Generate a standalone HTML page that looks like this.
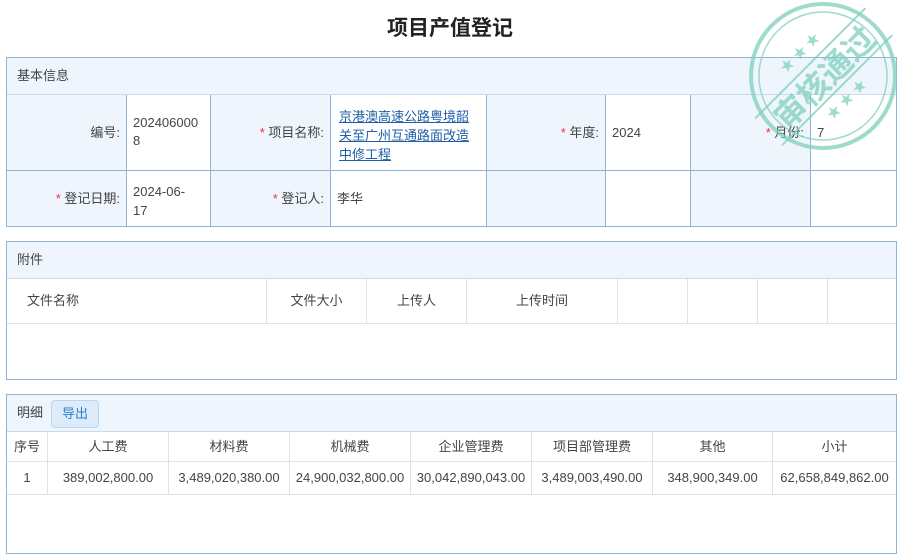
<!DOCTYPE html>
<html><head><meta charset="utf-8"><style>
*{margin:0;padding:0;box-sizing:border-box}
body{width:900px;height:547px;overflow:hidden;background:#fff;font-family:"Liberation Sans","Noto Sans CJK SC",sans-serif;font-size:13px;color:#444;position:relative}
.a{position:absolute}
.title{left:0;width:900px;top:12px;text-align:center;font-size:21px;font-weight:bold;color:#222}
.panel{position:absolute;left:6px;width:891px;border:1px solid #8fb4d4}
.ph{height:37px;background:#eef5fd;border-bottom:1px solid #c9dbea;padding-left:10px;line-height:36px}
.c{position:absolute;border-right:1px solid #8fb4d4;border-bottom:1px solid #8fb4d4}
.lb{background:#eef5fd;text-align:right;padding-right:6px}
.r{color:#e33}
.g{position:absolute;border-right:1px solid #e2e2e2;border-bottom:1px solid #e2e2e2;text-align:center}
</style></head><body>
<div class="a title">项目产值登记</div>

<div class="panel" style="top:57px;height:170px;">
<div class="ph">基本信息</div>
<div class="c lb" style="left:0;top:37px;width:120px;height:76px;line-height:76px">编号:</div>
<div class="c" style="left:120px;top:37px;width:84px;height:76px;padding:19px 6px 0;line-height:18px;word-break:break-all">2024060008</div>
<div class="c lb" style="left:204px;top:37px;width:120px;height:76px;line-height:76px"><span class="r">* </span>项目名称:</div>
<div class="c" style="left:324px;top:37px;width:156px;height:76px;padding:12px 8px 0;line-height:19px;color:#1f5fa8;text-decoration:underline">京港澳高速公路粤境韶关至广州互通路面改造中修工程</div>
<div class="c lb" style="left:480px;top:37px;width:119px;height:76px;line-height:76px"><span class="r">* </span>年度:</div>
<div class="c" style="left:599px;top:37px;width:85px;height:76px;line-height:76px;padding-left:6px">2024</div>
<div class="c lb" style="left:684px;top:37px;width:120px;height:76px;line-height:76px"><span class="r">* </span>月份:</div>
<div class="c" style="left:804px;top:37px;width:85px;height:76px;line-height:76px;padding-left:6px;border-right:none">7</div>
<div class="c lb" style="left:0;top:113px;width:120px;height:55px;line-height:55px;border-bottom:none"><span class="r">* </span>登记日期:</div>
<div class="c" style="left:120px;top:113px;width:84px;height:55px;padding:11px 6px 0;line-height:19px;border-bottom:none">2024-06-<br>17</div>
<div class="c lb" style="left:204px;top:113px;width:120px;height:55px;line-height:55px;border-bottom:none"><span class="r">* </span>登记人:</div>
<div class="c" style="left:324px;top:113px;width:156px;height:55px;line-height:55px;padding-left:6px;border-bottom:none">李华</div>
<div class="c lb" style="left:480px;top:113px;width:119px;height:55px;border-bottom:none"></div>
<div class="c" style="left:599px;top:113px;width:85px;height:55px;border-bottom:none"></div>
<div class="c lb" style="left:684px;top:113px;width:120px;height:55px;border-bottom:none"></div>
</div>
<div class="a" style="left:6px;top:57px;width:1px;height:170px;background:#8fb4d4"></div>

<div class="panel" style="top:241px;height:139px;">
<div class="ph">附件</div>
<div class="g" style="left:0;top:37px;width:260px;height:45px;line-height:44px;text-align:left;padding-left:20px">文件名称</div>
<div class="g" style="left:260px;top:37px;width:100px;height:45px;line-height:44px">文件大小</div>
<div class="g" style="left:360px;top:37px;width:100px;height:45px;line-height:44px">上传人</div>
<div class="g" style="left:460px;top:37px;width:151px;height:45px;line-height:44px">上传时间</div>
<div class="g" style="left:611px;top:37px;width:70px;height:45px"></div>
<div class="g" style="left:681px;top:37px;width:70px;height:45px"></div>
<div class="g" style="left:751px;top:37px;width:70px;height:45px"></div>
<div class="g" style="left:821px;top:37px;width:68px;height:45px;border-right:none"></div>
</div>

<div class="panel" style="top:394px;height:160px;">
<div class="ph">明细</div>
<div class="a" style="left:44px;top:5px;width:48px;height:28px;background:#dcecfb;border:1px solid #bcd6ee;border-radius:4px;color:#2d7fc8;text-align:center;line-height:26px">导出</div>
<div style="position:absolute;top:37px;left:0;width:889px">
<div class="g" style="left:0;top:0;width:41px;height:30px;line-height:29px">序号</div>
<div class="g" style="left:41px;top:0;width:121px;height:30px;line-height:29px">人工费</div>
<div class="g" style="left:162px;top:0;width:121px;height:30px;line-height:29px">材料费</div>
<div class="g" style="left:283px;top:0;width:121px;height:30px;line-height:29px">机械费</div>
<div class="g" style="left:404px;top:0;width:121px;height:30px;line-height:29px">企业管理费</div>
<div class="g" style="left:525px;top:0;width:121px;height:30px;line-height:29px">项目部管理费</div>
<div class="g" style="left:646px;top:0;width:120px;height:30px;line-height:29px">其他</div>
<div class="g" style="left:766px;top:0;width:123px;height:30px;line-height:29px;border-right:none">小计</div>
<div class="g" style="left:0;top:30px;width:41px;height:33px;line-height:32px">1</div>
<div class="g" style="left:41px;top:30px;width:121px;height:33px;line-height:32px">389,002,800.00</div>
<div class="g" style="left:162px;top:30px;width:121px;height:33px;line-height:32px">3,489,020,380.00</div>
<div class="g" style="left:283px;top:30px;width:121px;height:33px;line-height:32px">24,900,032,800.00</div>
<div class="g" style="left:404px;top:30px;width:121px;height:33px;line-height:32px">30,042,890,043.00</div>
<div class="g" style="left:525px;top:30px;width:121px;height:33px;line-height:32px">3,489,003,490.00</div>
<div class="g" style="left:646px;top:30px;width:120px;height:33px;line-height:32px">348,900,349.00</div>
<div class="g" style="left:766px;top:30px;width:123px;height:33px;line-height:32px;border-right:none">62,658,849,862.00</div>
</div>
</div>

<svg class="a" style="left:745px;top:0px" width="155" height="155" viewBox="0 0 155 155">
<g opacity="0.75" fill="none" stroke="#7fd0bb">
<circle cx="78" cy="76" r="72" stroke-width="4"/>
<circle cx="78" cy="76" r="64" stroke-width="1.5"/>
</g>
<g transform="rotate(-45 78 76)" opacity="0.75">
<line x1="0" y1="58" x2="156" y2="58" stroke="#7fd0bb" stroke-width="2"/>
<line x1="0" y1="96" x2="156" y2="96" stroke="#7fd0bb" stroke-width="2"/>
<text x="78" y="90" text-anchor="middle" font-family="Liberation Sans,Noto Sans CJK SC,sans-serif" font-weight="bold" font-size="32" fill="#7fd0bb">审核通过</text>
<text x="78" y="48" text-anchor="middle" font-size="14" fill="#7fd0bb">★ ★ ★</text>
<text x="78" y="114" text-anchor="middle" font-size="14" fill="#7fd0bb">★ ★ ★</text>
</g>
</svg>
</body></html>
